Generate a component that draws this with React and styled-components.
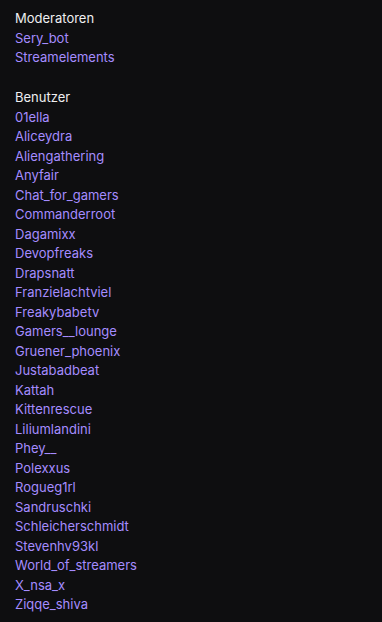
import React from "react";
import styled, { createGlobalStyle } from "styled-components";

const moderators = ["Sery_bot", "Streamelements"];
const users = [
  "01ella",
  "Aliceydra",
  "Aliengathering",
  "Anyfair",
  "Chat_for_gamers",
  "Commanderroot",
  "Dagamixx",
  "Devopfreaks",
  "Drapsnatt",
  "Franzielachtviel",
  "Freakybabetv",
  "Gamers__lounge",
  "Gruener_phoenix",
  "Justabadbeat",
  "Kattah",
  "Kittenrescue",
  "Liliumlandini",
  "Phey__",
  "Polexxus",
  "Rogueg1rl",
  "Sandruschki",
  "Schleicherschmidt",
  "Stevenhv93kl",
  "World_of_streamers",
  "X_nsa_x",
  "Ziqqe_shiva",
];

const Global = createGlobalStyle`
  html, body {
    margin: 0;
    background: #0e0e10;
  }
`;

const Wrapper = styled.div`
  width: 382px;
  height: 622px;
  box-sizing: border-box;
  padding: 9px 15px 0 15px;
  background: #0e0e10;
  font-family: Inter, "Noto Sans", sans-serif;
  font-size: 13px;
  line-height: 19.5px;
  display: flex;
  flex-direction: column;
  gap: 20.5px;
  overflow: hidden;
`;

const Section = styled.div`
  display: flex;
  flex-direction: column;
`;

const Heading = styled.div`
  color: #efeff1;
`;

const Name = styled.div`
  color: #a58cff;
  cursor: pointer;
`;

const App = () => {
  return (
    <>
      <Global />
      <Wrapper>
        <Section>
          <Heading>Moderatoren</Heading>
          {moderators.map((n) => (
            <Name key={n}>{n}</Name>
          ))}
        </Section>
        <Section>
          <Heading>Benutzer</Heading>
          {users.map((n) => (
            <Name key={n}>{n}</Name>
          ))}
        </Section>
      </Wrapper>
    </>
  );
};

export default App;
